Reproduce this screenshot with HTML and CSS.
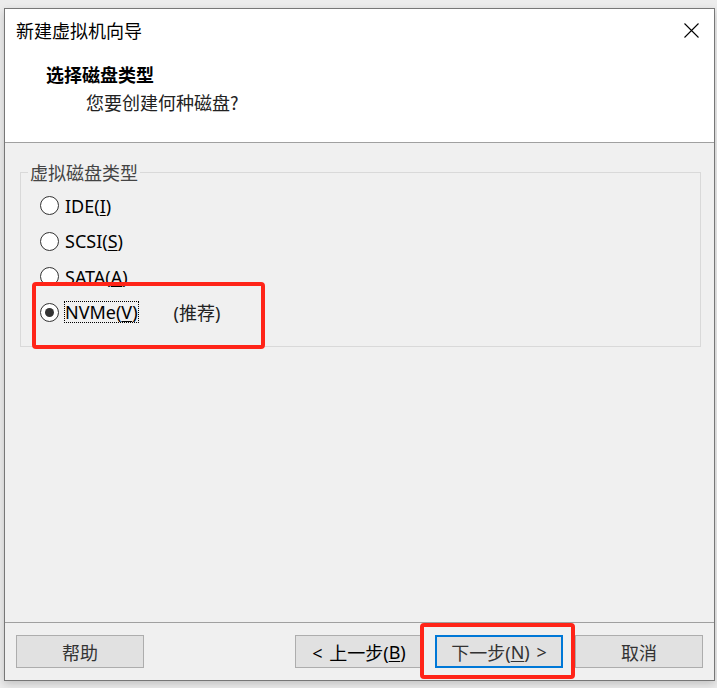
FILE: index.html
```html
<!DOCTYPE html>
<html lang="zh-CN">
<head>
<meta charset="utf-8">
<title>新建虚拟机向导</title>
<link rel="stylesheet" href="styles.css">
</head>
<body>
<div class="window">
  <div class="header">
    <div class="titlebar">
      <span class="title">新建虚拟机向导</span>
      <svg class="close" width="15" height="15" viewBox="0 0 15 15"><path d="M0.5 0.5 L14.5 14.5 M14.5 0.5 L0.5 14.5" stroke="#000" stroke-width="1.1" fill="none"/></svg>
    </div>
    <div class="heading">选择磁盘类型</div>
    <div class="sub">您要创建何种磁盘?</div>
  </div>
  <div class="content">
    <fieldset class="group">
      <legend class="legend">虚拟磁盘类型</legend>
      <div class="row"><span class="radio"></span><span class="label">IDE(<u>I</u>)</span></div>
      <div class="row"><span class="radio"></span><span class="label">SCSI(<u>S</u>)</span></div>
      <div class="row"><span class="radio"></span><span class="label">SATA(<u>A</u>)</span></div>
      <div class="row"><span class="radio checked"></span><span class="label focus">NVMe(<u>V</u>)</span><span class="rec">(推荐)</span></div>
    </fieldset>
    <div class="mark mark-nvme"></div>
  </div>
  <div class="footer">
    <button class="btn">帮助</button>
    <div class="nav">
      <button class="btn dark">&lt; 上一步(<u>B</u>)</button>
      <button class="btn primary">下一步(<u>N</u>) &gt;</button>
      <button class="btn">取消</button>
    </div>
    <div class="mark mark-next"></div>
  </div>
</div>
</body>
</html>
```
FILE: styles.css
```css
* { box-sizing: border-box; }
html, body { margin: 0; padding: 0; }
body {
  width: 717px;
  height: 688px;
  background: #ececec;
  font-family: "Noto Sans", "Noto Sans CJK SC", sans-serif;
  overflow: hidden;
  padding: 8px 0 0 4px;
}
.window {
  width: 711px;
  height: 673px;
  border: 1px solid #777;
  background: #f0f0f0;
  display: flex;
  flex-direction: column;
  box-shadow: 0 3px 8px rgba(0,0,0,0.18);
}
.header {
  background: #fff;
  height: 134px;
  border-bottom: 1px solid #a0a0a0;
  flex: none;
}
.titlebar {
  display: flex;
  justify-content: space-between;
  align-items: flex-start;
  padding: 12px 15px 0 11px;
}
.title {
  font-family: "Noto Sans CJK SC", sans-serif;
  font-size: 18px;
  line-height: 18px;
  color: #000;
}
.close { margin-top: 2px; }
.heading {
  font-family: "Noto Sans CJK SC", sans-serif;
  font-weight: bold;
  font-size: 18px;
  line-height: 18px;
  margin: 26px 0 0 41px;
  color: #000;
}
.sub {
  font-family: "Noto Sans CJK SC", sans-serif;
  font-size: 18px;
  line-height: 18px;
  margin: 10px 0 0 81px;
  color: #222;
}
.content {
  flex: 1;
  position: relative;
  padding: 20px 13px 0 15px;
}
.group {
  margin: 0;
  border: 1px solid #d9d9d9;
  padding: 7px 0 16px 19px;
  min-width: 0;
}
.legend {
  font-family: "Noto Sans CJK SC", sans-serif;
  font-size: 18px;
  line-height: 18px;
  color: #444;
  padding: 0 2px;
  margin-left: -12px;
}
.row {
  display: flex;
  align-items: center;
  height: 35.5px;
}
.radio {
  width: 19px;
  height: 19px;
  border: 1px solid #333;
  border-radius: 50%;
  background: #fff;
  flex: none;
  display: flex;
  align-items: center;
  justify-content: center;
}
.radio.checked::after {
  content: "";
  width: 9px;
  height: 9px;
  border-radius: 50%;
  background: #333;
}
.label {
  margin-left: 6px;
  font-size: 18px;
  line-height: 20px;
  color: #000;
}
.label u { text-underline-offset: 2px; }
.focus { outline: 1px dotted #000; outline-offset: 0; }
.rec {
  margin-left: 36px;
  font-size: 18px;
  color: #222;
}
.footer {
  flex: none;
  height: 58px;
  border-top: 1px solid #a0a0a0;
  display: flex;
  justify-content: space-between;
  padding: 12px 11px 0 11px;
  position: relative;
}
.nav { display: flex; gap: 12px; }
.btn {
  width: 128px;
  height: 33px;
  background: #e1e1e1;
  border: 1px solid #adadad;
  font-family: "Noto Sans", "Noto Sans CJK SC", sans-serif;
  font-size: 18px;
  color: #333;
  padding: 0;
  display: flex;
  align-items: center;
  justify-content: center;
  word-spacing: 2px;
}
.btn.dark { color: #000; }
.btn.primary { border: 2px solid #0078d7; }
.btn u { text-underline-offset: 2px; }
.mark {
  position: absolute;
  border: 4px solid #ff2418;
  border-radius: 4px;
}
.mark-nvme { left: 27px; top: 139px; width: 233px; height: 67px; }
.mark-next { left: 415px; top: 0px; width: 155px; height: 56px; }
```
